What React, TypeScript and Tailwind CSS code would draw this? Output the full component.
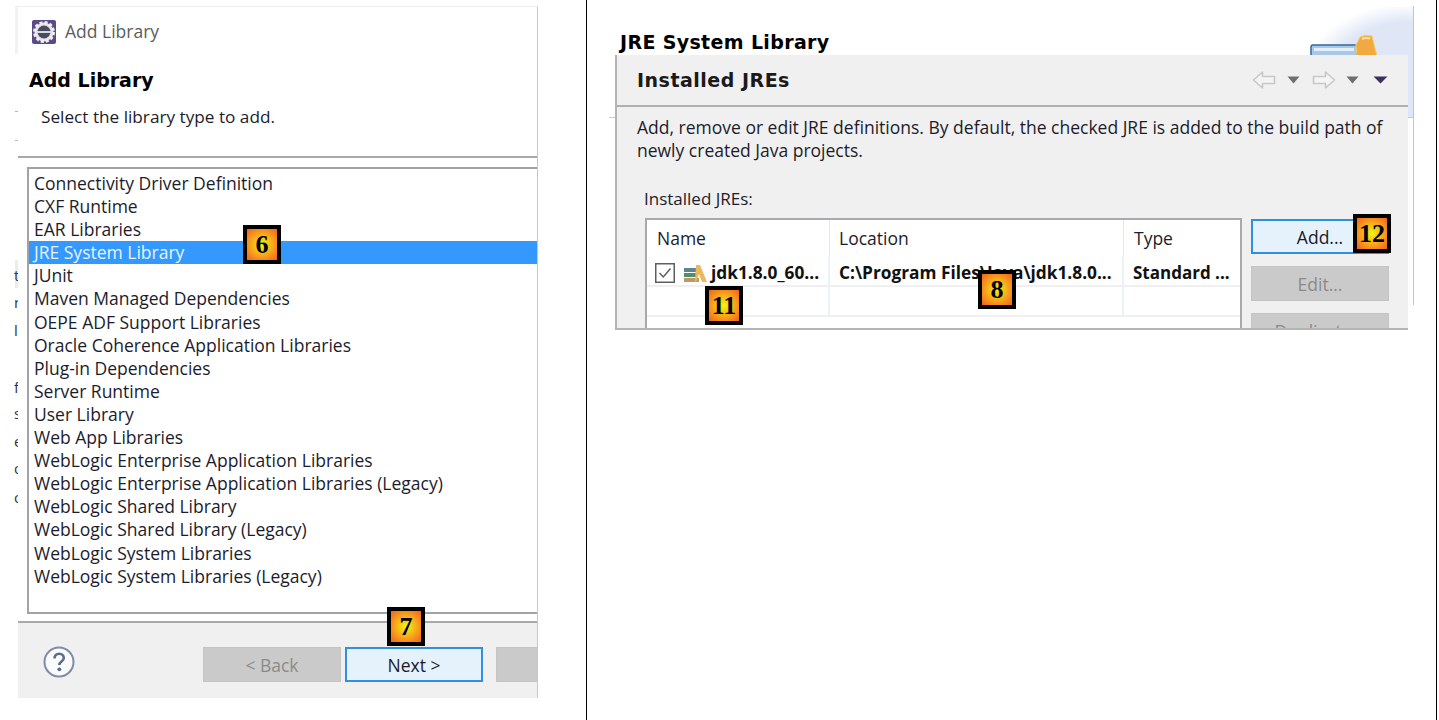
import type { ReactNode } from "react";

const libraries = [
  "Connectivity Driver Definition",
  "CXF Runtime",
  "EAR Libraries",
  "JRE System Library",
  "JUnit",
  "Maven Managed Dependencies",
  "OEPE ADF Support Libraries",
  "Oracle Coherence Application Libraries",
  "Plug-in Dependencies",
  "Server Runtime",
  "User Library",
  "Web App Libraries",
  "WebLogic Enterprise Application Libraries",
  "WebLogic Enterprise Application Libraries (Legacy)",
  "WebLogic Shared Library",
  "WebLogic Shared Library (Legacy)",
  "WebLogic System Libraries",
  "WebLogic System Libraries (Legacy)",
];

const sideMarks = [
  { top: "top-[266px]", text: "t" },
  { top: "top-[293px]", text: "r" },
  { top: "top-[321px]", text: "l" },
  { top: "top-[378px]", text: "f" },
  { top: "top-[404px]", text: "s" },
  { top: "top-[432px]", text: "e" },
  { top: "top-[459px]", text: "o" },
  { top: "top-[488px]", text: "o" },
];

function Badge({ className, children }: { className: string; children: ReactNode }) {
  return (
    <div
      className={`absolute z-20 flex h-[39px] w-[38px] items-center justify-center border-4 border-black bg-[radial-gradient(circle,#f0f010_5%,#f8a01c_55%,#f2601f_100%)] font-['Liberation_Serif',serif] text-[26px] font-bold leading-none text-black ${className}`}
    >
      {children}
    </div>
  );
}

function ActionButton({ label, active }: { label: string; active?: boolean }) {
  return (
    <div
      className={`flex h-[35px] w-[138px] shrink-0 items-center justify-center border pt-[1px] text-[17.5px] ${
        active
          ? "border-[#2f8fe0] border-2 bg-[#e5f1fb] text-[#1a1a2a]"
          : "border-[#c4c4c4] bg-[#cacaca] text-[#8a8a8a]"
      }`}
    >
      {label}
    </div>
  );
}

function AddLibraryDialog() {
  return (
    <div className="flex h-[692px] w-[520px] flex-col border-r border-t border-[#c8c8c8] border-t-[#eeeeee] bg-white">
      <div className="flex h-[48px] items-center gap-[8px] pl-[13px] pt-[1px]">
        <svg width="26" height="26" viewBox="0 0 26 26">
          <rect x="1" y="1" width="24" height="24" rx="2" fill="#5b4a86" />
          <circle cx="13" cy="13" r="9.5" fill="#e4e4e8" stroke="#f0f0f2" strokeWidth="3" strokeDasharray="3 2" />
          <circle cx="13" cy="13" r="6.5" fill="#4a4a5c" />
          <rect x="6" y="12" width="14" height="2" fill="#d8d8e0" />
        </svg>
        <span className="text-[17.5px] text-[#5c5c5c]">Add Library</span>
      </div>
      <div className="flex h-[103px] flex-col border-b-2 border-[#a9a9a9] pl-[11px]">
        <h1 className="pt-[12px] font-['DejaVu_Sans',sans-serif] text-[19px] font-bold leading-[26px] text-black">Add Library</h1>
        <p className="pl-[12px] pt-[12px] text-[17.2px] leading-[24px] text-[#1c1c2c]">Select the library type to add.</p>
      </div>
      <div className="pb-[7px] pl-[9px] pt-[9px]">
        <ul className="h-[447px] border-2 border-r-0 border-[#a2a2aa] pt-[3px]">
          {libraries.map((name) => (
            <li
              key={name}
              className={`h-[23.1px] whitespace-nowrap pl-[5px] text-[17.5px] leading-[23px] ${
                name === "JRE System Library" ? "bg-[#3399ff] text-[#e8f2ff]" : "text-[#1c1c2c]"
              }`}
            >
              {name}
            </li>
          ))}
        </ul>
      </div>
      <div className="flex flex-1 items-center border-t-2 border-[#a9a9a9] bg-[#f0f0f0] pl-[25px] pt-[8px]">
        <svg width="32" height="32" viewBox="0 0 32 32" className="mb-[5px] shrink-0">
          <circle cx="16" cy="16" r="14.5" fill="#fafbfd" stroke="#7f8ca8" strokeWidth="2" />
          <path d="M11.5 12.5c0-3 2-4.8 4.7-4.8s4.6 1.700 4.6 4.200c0 3.600-4.500 3.600-4.500 7.100" fill="none" stroke="#5f6c88" strokeWidth="2.6" />
          <circle cx="16.3" cy="23.3" r="1.9" fill="#5f6c88" />
        </svg>
        <div className="ml-[128px] flex gap-[4px]">
          <ActionButton label="< Back" />
          <ActionButton label="Next >" active />
        </div>
        <div className="ml-[13px] h-[35px] flex-1 border border-r-0 border-[#c4c4c4] bg-[#cacaca]" />
      </div>
    </div>
  );
}

function ArrowIcon({ flip }: { flip?: boolean }) {
  return (
    <svg width="24" height="20" viewBox="0 0 24 20" className={flip ? "-scale-x-100" : ""}>
      <path d="M1.5 10 10.5 2v4.500h12v7h-12V18z" fill="#f4f4f4" stroke="#c8c8c8" strokeWidth="1.6" strokeLinejoin="round" />
    </svg>
  );
}

function Caret({ dark }: { dark?: boolean }) {
  return (
    <svg width={dark ? 15 : 13} height="8" viewBox="0 0 13 8" preserveAspectRatio="none">
      <path d="M0.5 0.5h12L6.5 7.500z" fill={dark ? "#3f2f60" : "#6f6f6f"} />
    </svg>
  );
}

function InstalledJres() {
  return (
    <div className="absolute left-[28px] top-[55px] z-10 h-[275px] w-[793px] overflow-hidden border-b-2 border-l-2 border-[#b4b4b4] bg-[#f0f0f0]">
      <div className="flex h-[52px] items-center justify-between border-b-2 border-[#b0b0b0] pl-[20px] pr-[20px]">
        <h2 className="font-['DejaVu_Sans',sans-serif] text-[19px] font-bold tracking-[0.5px] text-[#1a1a1a]">Installed JREs</h2>
        <div className="flex items-center">
          <ArrowIcon />
          <span className="ml-[11px]"><Caret /></span>
          <span className="ml-[12px]"><ArrowIcon flip /></span>
          <span className="ml-[10px]"><Caret /></span>
          <span className="ml-[14px]"><Caret dark /></span>
        </div>
      </div>
      <p className="w-[770px] pl-[20px] pt-[9px] text-[17.5px] leading-[23px] text-[#1c1c2c]">
        Add, remove or edit JRE definitions. By default, the checked JRE is added to the build path of newly created Java projects.
      </p>
      <p className="pl-[27px] pt-[25px] text-[17px] leading-[24px] text-[#1c1c2c]">Installed JREs:</p>
      <div className="flex gap-[9px] pl-[28px] pt-[7px]">
        <div className="h-[130px] w-[597px] shrink-0 border-2 border-[#a8a8b0] bg-white text-[17.5px]">
          <div className="flex h-[37px] items-center text-[#1c1c2c]">
            <div className="flex h-full w-[183px] items-center border-r border-[#e8e8e8] pl-[10px]">Name</div>
            <div className="flex h-full w-[294px] items-center border-r border-[#e8e8e8] pl-[9px]">Location</div>
            <div className="flex h-full flex-1 items-center pl-[10px]">Type</div>
          </div>
          <div className="flex h-[30px] items-center border-b-2 border-[#f0f0f0] font-bold text-[#111111]">
            <div className="flex h-full w-[183px] items-center border-r-2 border-[#eaf2fb] pl-[8px] pt-[4px]">
              <svg width="20" height="20" viewBox="0 0 20 20" className="shrink-0">
                <rect x="0.75" y="0.75" width="18.5" height="18.5" fill="#fff" stroke="#5e5e5e" strokeWidth="1.5" />
                <path d="M4.5 10 8.3 14 15.5 5.500" fill="none" stroke="#5e5e5e" strokeWidth="1.5" />
              </svg>
              <svg width="24" height="18" viewBox="0 0 24 18" className="ml-[8px] shrink-0">
                <rect x="1" y="4" width="13" height="4" fill="#5c8494" />
                <rect x="1" y="9" width="13" height="4" fill="#4f9068" />
                <rect x="1" y="14" width="15" height="4" fill="#c09868" />
                <path d="M13 1h4l7 17h-5l-3-8-3 8h-1z" fill="#ecb85c" />
              </svg>
              <span className="ml-[4px] whitespace-nowrap text-[17.3px]">jdk1.8.0_60...</span>
            </div>
            <div className="flex h-full w-[294px] items-center whitespace-nowrap border-r-2 border-[#eaf2fb] pl-[9px] pt-[4px] text-[17.3px]">C:\Program Files\Java\jdk1.8.0...</div>
            <div className="flex h-full flex-1 items-center whitespace-nowrap pl-[9px] pt-[4px] text-[17px]">Standard ...</div>
          </div>
          <div className="flex h-[30px] border-b-2 border-[#f0f0f0]">
            <div className="w-[183px] border-r-2 border-[#eaf2fb]" />
            <div className="w-[294px] border-r-2 border-[#eaf2fb]" />
          </div>
        </div>
        <div className="flex flex-col gap-[12px] pt-[1px]">
          <ActionButton label="Add..." active />
          <ActionButton label="Edit..." />
          <ActionButton label="Duplicate..." />
        </div>
      </div>
    </div>
  );
}

export default function App() {
  return (
    <div className="relative flex h-[720px] w-[1439px] overflow-hidden bg-white font-['Open_Sans',sans-serif]">
      <div className="relative h-full w-[587px] shrink-0 border-r border-black pl-[18px] pt-[6px]">
        <div className="absolute left-[15px] top-[6px] h-[48px] w-[3px] bg-[#f2f2f2]" />
        <div className="absolute left-[15px] top-[111px] h-px w-[3px] bg-[#b8b8b8]" />
        <div className="absolute left-[15px] top-[140px] h-px w-[3px] bg-[#b8b8b8]" />
        <div className="absolute left-[15px] top-[260px] h-[28px] w-[3px] bg-[#ececec]" />
        {sideMarks.map((mark, i) => (
          <span key={i} className={`absolute left-[14px] w-[4px] overflow-hidden text-[15px] leading-[18px] text-[#33334a] ${mark.top}`}>
            {mark.text}
          </span>
        ))}
        <AddLibraryDialog />
        <Badge className="left-[243px] top-[225px]">6</Badge>
        <Badge className="left-[387px] top-[607px]">7</Badge>
      </div>
      <div className="relative h-full w-[850px] shrink-0 border-r border-black pl-[22px] pt-[6px]">
        <div className="h-[112px] w-[805px] border-b border-r border-[#c4c4c4] border-b-[#c8c8c8] pl-[11px] pt-[23px]">
          <h2 className="font-['DejaVu_Sans',sans-serif] text-[19px] font-bold leading-[26px] tracking-[0.35px] text-black">JRE System Library</h2>
        </div>
        <div className="h-[187px] w-[805px] border-r border-[#c4c4c4]" />
        <div className="absolute left-[724px] top-[7px] h-[110px] w-[102px] bg-[radial-gradient(ellipse_at_100%_60%,#dfe7f6_55%,#ffffff_75%)]" />
        <svg width="74" height="22" viewBox="0 0 74 22" className="absolute left-[722px] top-[34px]">
          <rect x="2" y="11" width="46" height="13" rx="2" fill="#a9c8e8" stroke="#33689c" strokeWidth="1.5" />
          <rect x="5" y="14" width="40" height="3" fill="#e4eef8" />
          <path d="M47 11 51 3q6-3 12-1l5 20H48z" fill="#f2aa40" stroke="#f0d070" />
          <path d="M53 5q4-1.500 8-.5" fill="none" stroke="#ffe0a0" strokeWidth="2" />
        </svg>
        <InstalledJres />
        <Badge className="left-[118px] top-[286px]">11</Badge>
        <Badge className="left-[391px] top-[270px]">8</Badge>
        <Badge className="left-[766px] top-[214px]">12</Badge>
      </div>
    </div>
  );
}
